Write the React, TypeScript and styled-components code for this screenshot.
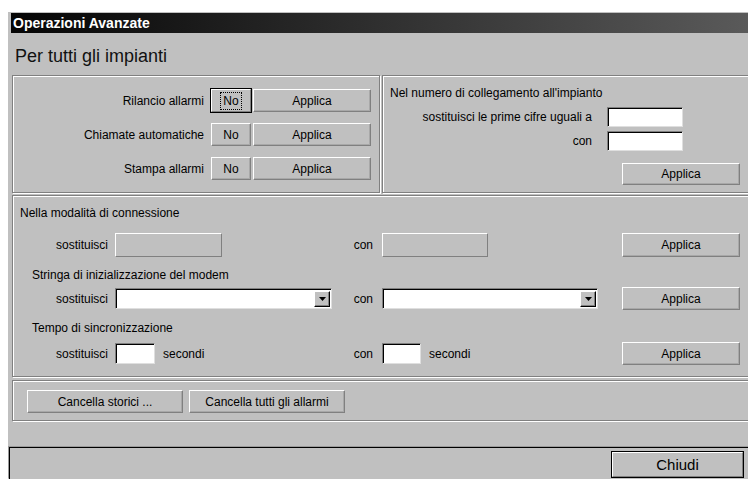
import { Fragment } from 'react';
import styled, { createGlobalStyle } from 'styled-components';

const GlobalStyle = createGlobalStyle`
  html, body {
    margin: 0;
    padding: 0;
    background: #fff;
    overflow: hidden;
  }
  body {
    font-family: "Liberation Sans", Arial, sans-serif;
    font-size: 12px;
    color: #000;
  }
`;

const Window = styled.div`
  width: 760px;
  height: 467px;
  margin: 12px 0 0 8px;
  background: #c0c0c0;
  display: flex;
  flex-direction: column;
`;

const TitleBar = styled.div`
  margin: 1px 0 0 3px;
  height: 20px;
  padding-left: 2px;
  background: linear-gradient(to right, #050505, #5c5c5c);
  color: #fff;
  font-weight: bold;
  font-size: 14px;
  line-height: 20px;
`;

const Content = styled.div`
  padding-left: 4px;
  display: flex;
  flex-direction: column;
`;

const Heading = styled.div`
  margin: 12px 0 8px 3px;
  font-size: 18px;
  line-height: 22px;
  color: #111;
`;

const TopRow = styled.div`
  display: flex;
  gap: 2px;
`;

// etched frame, like a Windows group box without caption
const Group = styled.div<{ $width?: number }>`
  border: 1px solid #808080;
  box-shadow: inset 1px 1px 0 #fff, 1px 1px 0 #fff;
  ${(p) => (p.$width ? `width: ${p.$width}px; flex: none;` : 'flex: 1;')}
  box-sizing: border-box;
`;

const ToggleList = styled.div`
  display: grid;
  grid-template-columns: 1fr 40px 118px;
  grid-auto-rows: 23px;
  row-gap: 11px;
  column-gap: 2px;
  padding: 13px 8px 12px 0;
  align-items: center;
`;

const RowLabel = styled.span`
  text-align: right;
  margin-right: 5px;
  white-space: nowrap;
`;

const Button = styled.button<{ $default?: boolean }>`
  font-family: "Liberation Sans", Arial, sans-serif;
  font-size: 12px;
  color: #000;
  background: #c0c0c0;
  height: 23px;
  padding: 0;
  box-sizing: border-box;
  border: 1px solid;
  border-color: #fff #808080 #808080 #fff;
  box-shadow: ${(p) => (p.$default ? '0 0 0 1px #000' : 'inset -1px -1px 0 #a8a8a8')};
  display: flex;
  align-items: center;
  justify-content: center;
  cursor: default;
`;

const FocusMark = styled.span`
  outline: 1px dotted #000;
  outline-offset: 1px;
  padding: 0 1px;
`;

const NumberPanel = styled.div`
  padding: 10px 0 0 7px;
`;

const PanelTitle = styled.div`
  line-height: 14px;
`;

const PrefixGrid = styled.div`
  display: grid;
  grid-template-columns: 207px 76px;
  grid-auto-rows: 20px;
  column-gap: 10px;
  row-gap: 4px;
  margin-top: 7px;
  align-items: center;
`;

const TextField = styled.div<{ $w: number; $h?: number; $disabled?: boolean }>`
  width: ${(p) => p.$w}px;
  height: ${(p) => p.$h ?? 21}px;
  box-sizing: border-box;
  border: 1px solid;
  ${(p) =>
    p.$disabled
      ? `background: #c0c0c0; border-color: #fff #808080 #808080 #fff;`
      : `background: #fff; border-color: #808080 #dfdfdf #dfdfdf #808080; box-shadow: inset 1px 1px 0 #000;`}
  flex: none;
`;

const Combo = styled.div<{ $w: number }>`
  width: ${(p) => p.$w}px;
  height: 21px;
  box-sizing: border-box;
  background: #fff;
  border: 1px solid;
  border-color: #808080 #dfdfdf #dfdfdf #808080;
  box-shadow: inset 1px 1px 0 #000;
  display: flex;
  justify-content: flex-end;
  padding: 2px 1px 1px 2px;
  flex: none;
`;

const ComboArrow = styled.div`
  width: 16px;
  height: 100%;
  box-sizing: border-box;
  background: #c0c0c0;
  border: 1px solid;
  border-color: #fff #000 #000 #fff;
  box-shadow: inset -1px -1px 0 #808080;
  display: flex;
  align-items: center;
  justify-content: center;
`;

const ApplyRow = styled.div`
  margin: 12px 0 0 232px;
`;

const ConnectionGroup = styled(Group)`
  margin-top: 2px;
  padding: 10px 0 11px;
  display: flex;
  flex-direction: column;
`;

const SectionTitle = styled.div<{ $indent: number; $top: number }>`
  line-height: 14px;
  padding-left: ${(p) => p.$indent}px;
  margin-top: ${(p) => p.$top}px;
`;

const FieldRow = styled.div<{ $top: number }>`
  display: flex;
  align-items: center;
  margin-top: ${(p) => p.$top}px;
`;

const FieldLabel = styled.span<{ $w: number; $gap: number }>`
  width: ${(p) => p.$w}px;
  margin-right: ${(p) => p.$gap}px;
  text-align: right;
  flex: none;
`;

const Slot = styled.div<{ $w: number }>`
  width: ${(p) => p.$w}px;
  display: flex;
  align-items: center;
  gap: 8px;
  flex: none;
`;

const ActionsGroup = styled(Group)`
  margin-top: 3px;
  padding: 9px 0 7px 14px;
  display: flex;
  gap: 6px;
`;

const Footer = styled.div`
  margin: auto 0 0 1px;
  height: 32px;
  box-sizing: border-box;
  border-top: 1px solid #000;
  border-left: 1px solid #000;
  box-shadow: -1px -1px 0 #9a9a9a;
  padding: 4px 0 0 602px;
`;

const CloseButton = styled(Button)`
  width: 131px;
  height: 25px;
  font-size: 15px;
`;

function Arrow() {
  return (
    <svg width="7" height="4" viewBox="0 0 7 4">
      <polygon points="0,0 7,0 3.5,4" fill="#000" />
    </svg>
  );
}

const toggles = ['Rilancio allarmi', 'Chiamate automatiche', 'Stampa allarmi'];

function App() {
  return (
    <>
      <GlobalStyle />
      <Window>
        <TitleBar>Operazioni Avanzate</TitleBar>
        <Content>
          <Heading>Per tutti gli impianti</Heading>
          <TopRow>
            <Group $width={368}>
              <ToggleList>
                {toggles.map((label, i) => (
                  <Fragment key={label}>
                    <RowLabel>{label}</RowLabel>
                    <Button $default={i === 0}>
                      {i === 0 ? <FocusMark>No</FocusMark> : 'No'}
                    </Button>
                    <Button>Applica</Button>
                  </Fragment>
                ))}
              </ToggleList>
            </Group>
            <Group>
              <NumberPanel>
                <PanelTitle>Nel numero di collegamento all'impianto</PanelTitle>
                <PrefixGrid>
                  <RowLabel>sostituisci le prime cifre uguali a</RowLabel>
                  <TextField $w={76} $h={20} />
                  <RowLabel>con</RowLabel>
                  <TextField $w={76} $h={20} />
                </PrefixGrid>
                <ApplyRow>
                  <Button style={{ width: 118, height: 22 }}>Applica</Button>
                </ApplyRow>
              </NumberPanel>
            </Group>
          </TopRow>

          <ConnectionGroup>
            <SectionTitle $indent={7} $top={0}>Nella modalità di connessione</SectionTitle>
            <FieldRow $top={13}>
              <FieldLabel $w={95} $gap={7}>sostituisci</FieldLabel>
              <Slot $w={230}>
                <TextField $w={107} $h={24} $disabled />
              </Slot>
              <FieldLabel $w={28} $gap={9}>con</FieldLabel>
              <Slot $w={240}>
                <TextField $w={106} $h={24} $disabled />
              </Slot>
              <Button style={{ width: 118, height: 24 }}>Applica</Button>
            </FieldRow>

            <SectionTitle $indent={19} $top={11}>Stringa di inizializzazione del modem</SectionTitle>
            <FieldRow $top={5}>
              <FieldLabel $w={95} $gap={7}>sostituisci</FieldLabel>
              <Slot $w={230}>
                <Combo $w={217}>
                  <ComboArrow>
                    <Arrow />
                  </ComboArrow>
                </Combo>
              </Slot>
              <FieldLabel $w={28} $gap={9}>con</FieldLabel>
              <Slot $w={240}>
                <Combo $w={216}>
                  <ComboArrow>
                    <Arrow />
                  </ComboArrow>
                </Combo>
              </Slot>
              <Button style={{ width: 118 }}>Applica</Button>
            </FieldRow>

            <SectionTitle $indent={19} $top={11}>Tempo di sincronizzazione</SectionTitle>
            <FieldRow $top={7}>
              <FieldLabel $w={95} $gap={7}>sostituisci</FieldLabel>
              <Slot $w={230}>
                <TextField $w={40} />
                <span>secondi</span>
              </Slot>
              <FieldLabel $w={28} $gap={9}>con</FieldLabel>
              <Slot $w={240}>
                <TextField $w={39} />
                <span>secondi</span>
              </Slot>
              <Button style={{ width: 118 }}>Applica</Button>
            </FieldRow>
          </ConnectionGroup>

          <ActionsGroup>
            <Button style={{ width: 156 }}>Cancella storici ...</Button>
            <Button style={{ width: 156 }}>Cancella tutti gli allarmi</Button>
          </ActionsGroup>
        </Content>
        <Footer>
          <CloseButton $default>Chiudi</CloseButton>
        </Footer>
      </Window>
    </>
  );
}

export default App;
